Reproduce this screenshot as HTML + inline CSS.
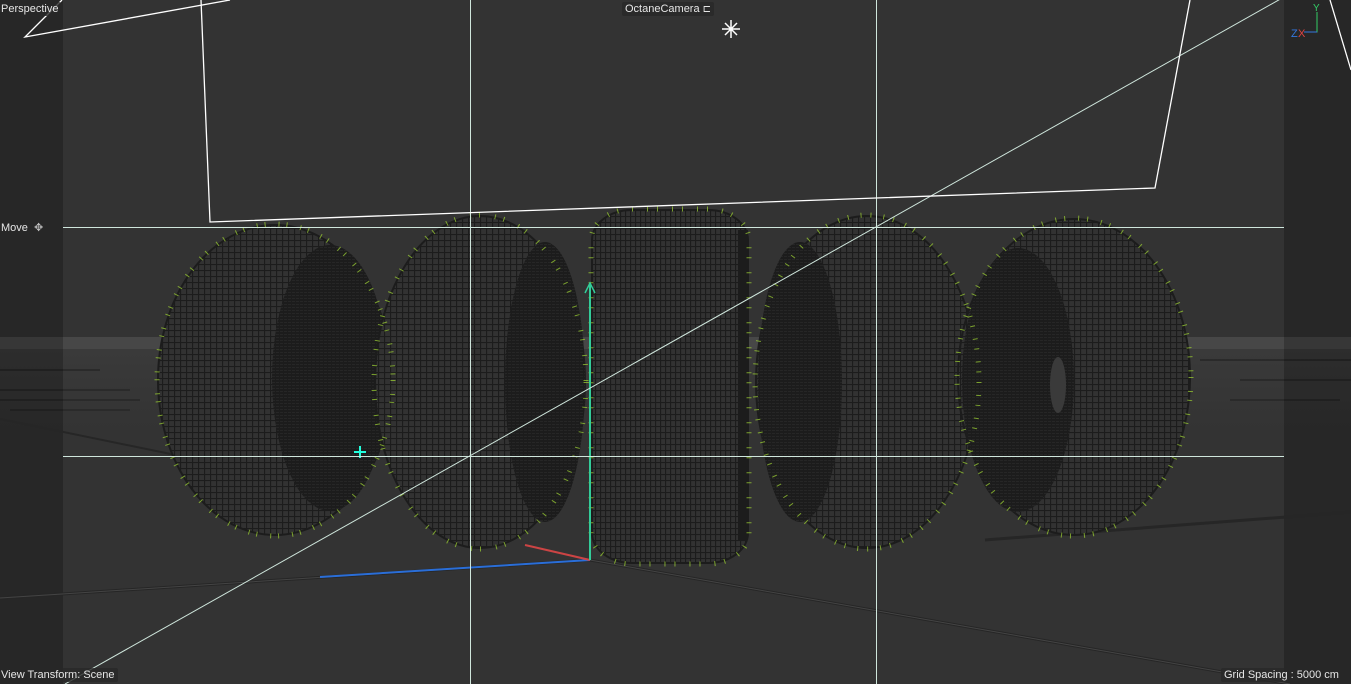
<!DOCTYPE html>
<html><head><meta charset="utf-8"><style>
html,body{margin:0;padding:0;background:#333;overflow:hidden}
.wrap{position:relative;width:1351px;height:684px;font-family:"Liberation Sans",sans-serif}
svg{position:absolute;left:0;top:0}
.lbl{position:absolute;color:#e6e6e6;font-size:11px;background:rgba(40,40,40,.8);padding:1px 3px;border-radius:2px;white-space:nowrap}
</style></head><body><div class="wrap">
<svg width="1351" height="684" viewBox="0 0 1351 684">
<defs>
<pattern id="g" width="6" height="6" patternUnits="userSpaceOnUse">
<rect width="6" height="6" fill="#323232"/><path d="M0 0.5H6M0.5 0V6" stroke="#1c1c1c" stroke-width="1.3"/></pattern>
<pattern id="g2" width="5" height="6" patternUnits="userSpaceOnUse">
<rect width="5" height="6" fill="#323232"/><path d="M0 0.5H5M0.5 0V6" stroke="#1c1c1c" stroke-width="1.3"/></pattern>
<pattern id="r" width="4" height="3" patternUnits="userSpaceOnUse">
<rect width="4" height="3" fill="#1c1c1c"/><path d="M0 1.5H3" stroke="#262626" stroke-width="1"/></pattern>
<linearGradient id="gnd" x1="0" y1="0" x2="0" y2="1"><stop offset="0" stop-color="#3a3a3a"/><stop offset="1" stop-color="#333"/></linearGradient>
</defs>
<rect width="1351" height="684" fill="#333"/>
<rect x="0" y="337" width="1351" height="12" fill="#474747"/>
<rect x="0" y="349" width="1351" height="80" fill="url(#gnd)"/>
<g stroke="#262626" stroke-width="1.5">
<path d="M0 370H100M200 372H400M0 390H130M230 378H420M0 400H140M210 390H370M10 410H130M190 408H310M1200 360H1351M1240 380H1351M1230 400H1340"/>
</g>
<rect x="0" y="0" width="63" height="684" fill="#000" opacity=".22"/>
<rect x="1284" y="0" width="67" height="684" fill="#000" opacity=".22"/>
<path d="M0 598L590 560L1290 684" stroke="#262626" stroke-width="3" fill="none"/>
<path d="M0 598L590 560L1290 684" stroke="#444" stroke-width="1" fill="none"/>
<path d="M0 419L200 460" stroke="#262626" stroke-width="2"/>
<path d="M985 540L1351 512" stroke="#262626" stroke-width="3"/>
<g stroke="#1c1c1c" stroke-width="2">
<ellipse cx="275" cy="380" rx="117" ry="155" fill="url(#g)"/>
<ellipse cx="330" cy="378" rx="58" ry="133" fill="url(#r)" stroke="none"/>
<ellipse cx="480" cy="382" rx="105" ry="166" fill="url(#g)"/>
<ellipse cx="545" cy="382" rx="40" ry="140" fill="url(#r)" stroke="none"/>
<rect x="592" y="210" width="156" height="353" rx="40" ry="30" fill="url(#g2)"/>
<rect x="738" y="230" width="10" height="310" fill="#1c1c1c" stroke="none"/>
<ellipse cx="867" cy="382" rx="111" ry="166" fill="url(#g)"/>
<ellipse cx="800" cy="382" rx="42" ry="140" fill="url(#r)" stroke="none"/>
<ellipse cx="1074" cy="377" rx="116" ry="158" fill="url(#g)"/>
<ellipse cx="1018" cy="380" rx="56" ry="132" fill="url(#r)" stroke="none"/>
<ellipse cx="1058" cy="385" rx="8" ry="28" fill="#3a3a3a" stroke="none"/>
</g>
<g fill="none" stroke="#9c3" stroke-width="5" opacity=".75">
<ellipse cx="275" cy="380" rx="118" ry="156" stroke-dasharray="1 13 1 7"/>
<ellipse cx="480" cy="382" rx="106" ry="167" stroke-dasharray="1 15 1 8"/>
<rect x="591" y="209" width="158" height="355" rx="41" ry="31" stroke-dasharray="1 14 1 9"/>
<ellipse cx="867" cy="382" rx="112" ry="167" stroke-dasharray="1 12 1 9"/>
<ellipse cx="1074" cy="377" rx="117" ry="159" stroke-dasharray="1 13 1 8"/>
</g>
<path d="M320 577L590 560" stroke="#2a6ed8" stroke-width="2"/>
<path d="M525 545L590 560" stroke="#c44" stroke-width="2"/>
<path d="M590 283V560" stroke="#3c9" stroke-width="2"/>
<path d="M585 293L590 283L595 293" stroke="#3c9" stroke-width="1.5" fill="none"/>
<path d="M354 452H366M360 446V458" stroke="#2fd" stroke-width="2"/>
<g stroke="#cfe6dc" stroke-width="1" fill="none">
<path d="M63 227.5H1284M63 456.5H1284M470.5 0V684M876.5 0V684M65 684L1284 -3"/>
</g>
<g stroke="#fff" stroke-width="1.3" fill="none">
<path d="M62 0L25 37L230 0M201 0L210 222L1155 188L1190 0M1330 0L1351 70"/>
</g>
<g stroke="#fff" stroke-width="1.5"><path d="M722 29H740M731 20V38M725 23L737 35M737 23L725 35"/></g>
<path d="M1317 12V32H1304" stroke="#3c6" stroke-width="1" fill="none"/>
<path d="M1304 32H1317" stroke="#37d" stroke-width="1"/>
<text x="1313" y="11" fill="#3c6" font-size="10" font-family="Liberation Sans">Y</text>
<text x="1291" y="37" fill="#37d" font-size="11" font-family="Liberation Sans">Z</text>
<text x="1298" y="37" fill="#d44" font-size="11" font-family="Liberation Sans">X</text>
</svg>
<div class="lbl" style="left:-2px;top:2px">Perspective</div>
<div class="lbl" style="left:622px;top:2px">OctaneCamera <span style="font-size:10px">⊏</span></div>
<div class="lbl" style="left:-2px;top:220px">Move &nbsp;<span style="color:#bbb">✥</span></div>
<div class="lbl" style="left:-2px;top:668px">View Transform: Scene</div>
<div class="lbl" style="left:1221px;top:668px">Grid Spacing : 5000 cm</div>
</div></body></html>
